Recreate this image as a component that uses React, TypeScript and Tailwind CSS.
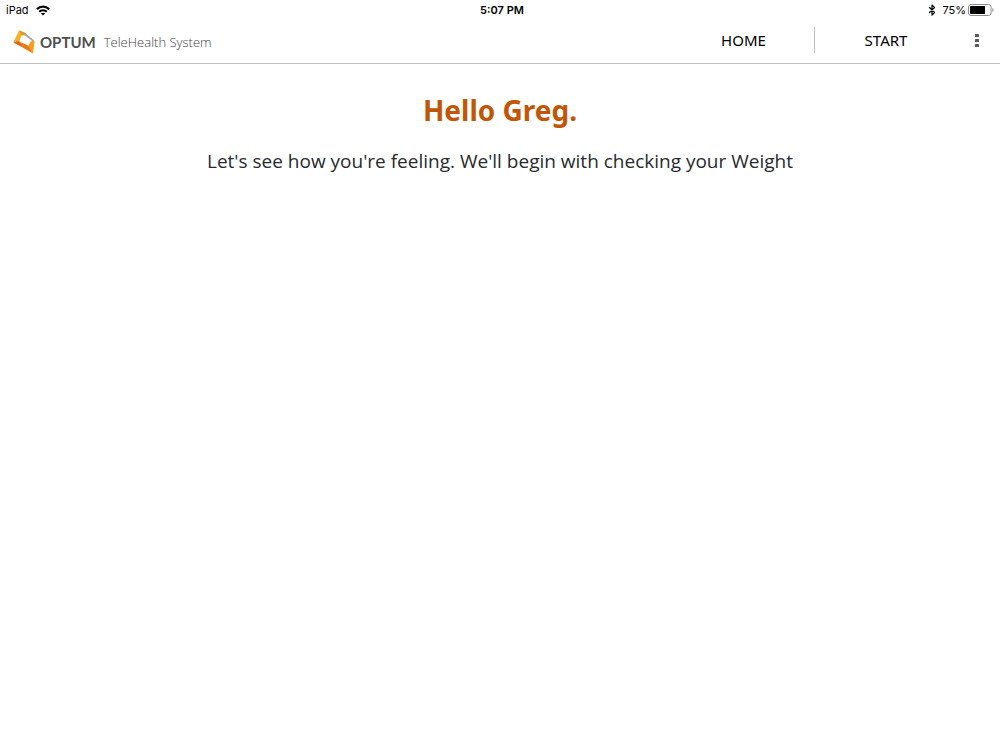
import { Bluetooth } from 'lucide-react';

const WifiIcon = () => (
    <svg viewBox="0 0 14 11" className="w-[14px] h-[11px]" fill="none" stroke="#000" strokeWidth="2.2">
        <path d="M0.9 4.1 C4.4 0.7 9.6 0.7 13.1 4.1" />
        <path d="M3.2 6.8 C5.4 4.7 8.6 4.7 10.8 6.8" />
        <path d="M7 10.6 L4.9 8.6 C6.1 7.5 7.9 7.5 9.1 8.6 Z" fill="#000" stroke="none" />
    </svg>
);

const BatteryIcon = () => (
    <svg viewBox="0 0 26 12" className="w-[26px] h-3">
        <rect x="0.5" y="0.5" width="22.5" height="11" rx="2.5" fill="#fff" stroke="#8c8c8c" />
        <rect x="2" y="2" width="15" height="8" rx="0.8" fill="#000" />
        <path d="M24.3 4 C26 4.6 26 7.4 24.3 8 Z" fill="#8c8c8c" />
    </svg>
);

const OptumMark = () => (
    <svg viewBox="0 0 22 24" className="w-[22px] h-6">
        <path d="M6.2 0.2 L0.4 12.2 L6 12.6 L8.6 5 Z" fill="#f3b224" />
        <path d="M6.2 0.2 L12.6 3 L12.2 5.2 L8.4 5.4 Z" fill="#dc9a20" />
        <path d="M11.6 2.6 L21.4 10.8 L19.4 11.2 L11.4 5 Z" fill="#a3a4a6" />
        <path d="M21.6 10.8 L20 23.4 L14.6 17 L17.6 11.4 Z" fill="#f5a01c" />
        <path d="M0.4 12.2 L5.6 11.2 L15 15.6 L20 23.4 Z" fill="#ea7a1c" />
        <path d="M0.4 12.2 L5.6 11.2 L9 17 Z" fill="#dc651c" />
    </svg>
);

const StatusBar = () => (
    <div className="grid grid-cols-3 items-center h-5 px-[6px] font-['Inter',sans-serif] text-[11px] leading-5 text-black">
        <div className="flex items-center gap-[7px]">
            <span>iPad</span>
            <WifiIcon />
        </div>
        <span className="text-center font-semibold pl-1">5:07 PM</span>
        <div className="flex items-center justify-end">
            <Bluetooth className="w-3 h-3 mr-1" strokeWidth={2.4} />
            <span className="mr-[2px]">75%</span>
            <BatteryIcon />
        </div>
    </div>
);

const Header = () => (
    <header className="flex items-center justify-between h-11 px-[3px] border-b border-[#bdbdbd]">
        <div className="flex items-center pl-[10px]">
            <OptumMark />
            <div className="flex items-center gap-2 pl-[5px] pt-[2px]">
                <span className="font-['Lato',sans-serif] text-[15px] font-bold text-[#4d4e50]">OPTUM</span>
                <span className="font-['Open_Sans',sans-serif] text-[13px] font-light text-[#3f4246]">
                    TeleHealth System
                </span>
            </div>
        </div>
        <nav className="flex items-center pb-[3px] text-[15px] text-black">
            <button type="button" className="w-[142px] h-[26px] border-r border-[#bdbdbd]">
                HOME
            </button>
            <button type="button" className="w-[142px] h-[26px]">
                START
            </button>
            <button type="button" aria-label="Menu" className="w-10 h-[26px] flex items-center justify-center">
                <svg viewBox="0 0 4 13" className="w-1 h-[13px]" fill="#58595b">
                    <rect width="4" height="3" rx="0.5" />
                    <rect y="5" width="4" height="3" rx="0.5" />
                    <rect y="10" width="4" height="3" rx="0.5" />
                </svg>
            </button>
        </nav>
    </header>
);

const App = () => (
    <div className="min-h-screen bg-white font-['Noto_Sans','Open_Sans',sans-serif]">
        <StatusBar />
        <Header />
        <main className="flex flex-col items-center px-4 pt-6 text-center">
            <h1 className="text-[28px] leading-[44px] font-bold text-[#c25608]">Hello Greg.</h1>
            <p className="mt-[15px] font-['Open_Sans',sans-serif] text-[19px] leading-7 text-[#282a2e]">
                Let's see how you're feeling. We'll begin with checking your Weight
            </p>
        </main>
    </div>
);

export default App;
